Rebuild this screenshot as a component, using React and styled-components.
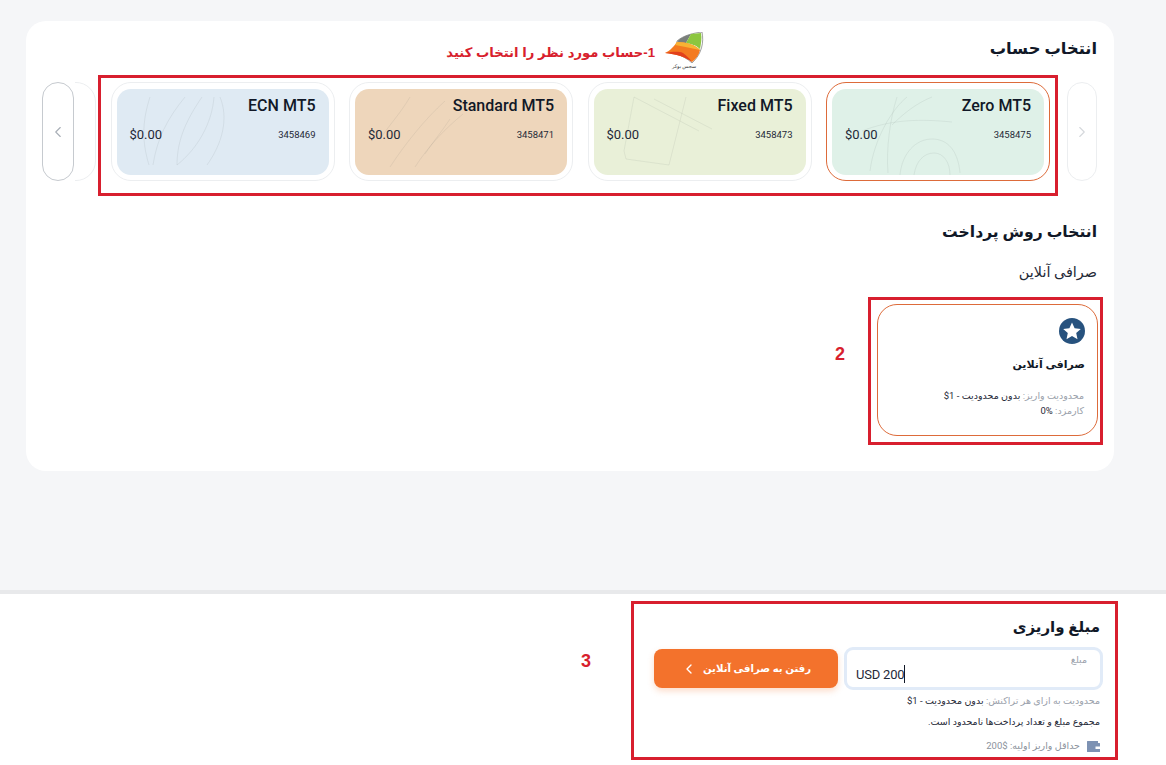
import React from 'react';
import styled, { createGlobalStyle } from 'styled-components';
import { ChevronLeft, ChevronRight } from 'lucide-react';

const GlobalStyle = createGlobalStyle`
  html, body {
    margin: 0;
    padding: 0;
    background: #f5f6f8;
  }
  body {
    font-family: Roboto, "DejaVu Sans", sans-serif;
    color: #111827;
    overflow: hidden;
  }
`;

const Page = styled.div`
  position: relative;
  direction: rtl;
  height: 765px;
  display: flex;
  flex-direction: column;
  justify-content: space-between;
`;

const Panel = styled.section`
  position: relative;
  margin: 21px 52px 0 26px;
  height: 450px;
  box-sizing: border-box;
  padding: 17px 17px 0 16px;
  background: #fff;
  border-radius: 20px;
`;

const Heading = styled.h2`
  margin: 0;
  font-size: 16.3px;
  line-height: 22px;
  font-weight: 700;
  color: #111827;
`;

const Carousel = styled.div`
  position: relative;
  display: flex;
  align-items: stretch;
  height: 99px;
  margin-top: 22px;
`;

const Arrow = styled.button`
  flex: 0 0 auto;
  width: ${(p) => (p.$muted ? 30 : 32)}px;
  height: 99px;
  padding: 0;
  display: flex;
  align-items: center;
  justify-content: center;
  background: #fff;
  border-radius: 16px;
  border: 1px solid ${(p) => (p.$muted ? '#eceef0' : '#c6cacf')};
  color: ${(p) => (p.$muted ? '#d5d8dc' : '#a8aeb6')};
`;

const Track = styled.div`
  flex: 1 1 auto;
  display: flex;
  gap: 14.5px;
  overflow: hidden;
  margin: 0 17px 0 1px;
`;

const AccountCard = styled.article`
  flex: 0 0 auto;
  width: 224px;
  height: 99px;
  box-sizing: border-box;
  padding: 6px 5px;
  border-radius: 20px;
  background: #fff;
  border: 1px solid ${(p) => (p.$active ? '#dd6b3a' : '#eceef0')};
`;

const CardFace = styled.div`
  position: relative;
  height: 86px;
  box-sizing: border-box;
  padding: 7px 13px 0 13px;
  border-radius: 14px;
  background: ${(p) => p.$bg};
  overflow: hidden;
`;

const Doodle = styled.svg`
  position: absolute;
  inset: 0;
  width: 100%;
  height: 100%;
  fill: none;
  stroke: rgba(90, 100, 100, 0.13);
  stroke-width: 0.7;
`;

const CardTitle = styled.div`
  position: relative;
  font-size: 16px;
  line-height: 20px;
  font-weight: 500;
  color: #111827;
`;

const CardRow = styled.div`
  position: relative;
  display: flex;
  justify-content: space-between;
  align-items: center;
  margin-top: 9px;
  height: 18px;
`;

const Number = styled.span`
  font-size: 9.5px;
  color: #1f2937;
`;

const Balance = styled.span`
  font-size: 13px;
  color: #1f2937;
`;

const PaymentHeading = styled(Heading)`
  margin-top: 40px;
  font-size: 15.6px;
`;

const GroupLabel = styled.div`
  margin-top: 19px;
  font-size: 14.4px;
  line-height: 22px;
  color: #1f2937;
`;

const MethodCard = styled.article`
  position: relative;
  margin: 20px -1px 0 0;
  width: 221px;
  height: 132px;
  box-sizing: border-box;
  padding: 13px 12px 0;
  border: 1px solid #dd6b3a;
  border-radius: 20px;
`;

const MethodIcon = styled.svg`
  display: block;
  width: 26px;
  height: 26px;
`;

const MethodTitle = styled.div`
  margin-top: 12px;
  font-size: 11px;
  line-height: 18px;
  font-weight: 700;
  color: #111827;
`;

const MetaRow = styled.div`
  font-size: 9.5px;
  line-height: 15px;
  color: #1f2937;
`;

const MetaList = styled.div`
  margin: 14px 1px 0 0;
`;

const Muted = styled.span`
  color: #9aa1ab;
`;

const Ltr = styled.bdi`
  direction: ltr;
`;

const BottomBar = styled.section`
  position: relative;
  height: 175px;
  box-sizing: border-box;
  padding: 22px 66px 0 0;
  background: #fff;
  border-top: 4px solid #e8e9eb;
`;

const DepositHeading = styled(Heading)`
  font-size: 15px;
`;

const FormRow = styled.div`
  display: flex;
  align-items: center;
  gap: 6px;
  margin: 9px -3px 0 0;
`;

const AmountField = styled.div`
  width: 259px;
  height: 43px;
  box-sizing: border-box;
  padding: 4px 13px 0 9px;
  border: 3px solid #e1ebf8;
  border-radius: 9px;
  background: #fff;
`;

const FieldLabel = styled.div`
  font-size: 9.5px;
  line-height: 11px;
  color: #9aa1ab;
`;

const FieldValue = styled.div`
  direction: ltr;
  display: flex;
  align-items: center;
  height: 18px;
  font-size: 13px;
  letter-spacing: -0.2px;
  color: #1f2937;
`;

const Caret = styled.span`
  width: 1px;
  height: 18px;
  background: #111827;
`;

const SubmitButton = styled.button`
  width: 184px;
  height: 39px;
  display: flex;
  align-items: center;
  justify-content: center;
  gap: 6px;
  padding: 0;
  border: 0;
  border-radius: 8px;
  background: #f3722c;
  color: #fff;
  font-family: inherit;
  font-size: 10.2px;
  font-weight: 700;
  box-shadow: 0 3px 6px rgba(243, 114, 44, 0.25);
`;

const Hint = styled.div`
  margin-top: ${(p) => p.$gap}px;
  font-size: 9.5px;
  line-height: 14px;
  color: #1f2937;
`;

const MinRow = styled.div`
  display: flex;
  align-items: center;
  gap: 6px;
  margin-top: 10px;
  font-size: 9.5px;
  line-height: 14px;
  color: #8b929c;
`;

const Frame = styled.div`
  position: absolute;
  top: ${(p) => p.$top}px;
  left: ${(p) => p.$left}px;
  width: ${(p) => p.$w}px;
  height: ${(p) => p.$h}px;
  box-sizing: border-box;
  border: 3px solid #d81f2e;
  pointer-events: none;
`;

const StepNumber = styled.div`
  position: absolute;
  top: ${(p) => p.$top}px;
  left: ${(p) => p.$left}px;
  font-family: "Liberation Sans", sans-serif;
  font-size: 18px;
  line-height: 20px;
  font-weight: 700;
  color: #d81f2e;
`;

const Note = styled.div`
  position: absolute;
  top: 11px;
  left: 420px;
  width: 258px;
  display: flex;
  align-items: flex-start;
  gap: 9px;
`;

const NoteText = styled.div`
  margin-top: 11px;
  font-family: "Liberation Sans", "DejaVu Sans", sans-serif;
  font-size: 13.2px;
  font-weight: 700;
  line-height: 20px;
  color: #d81f2e;
  white-space: nowrap;
`;

const Logo = styled.div`
  flex: 0 0 auto;
  width: 40px;
  text-align: center;
  font-size: 5px;
  line-height: 6px;
  color: #333;
`;

const LogoMark = styled.svg`
  display: block;
  width: 40px;
  height: 31px;
`;

const ACCOUNTS = [
  { name: 'Zero MT5', number: '3458475', bg: '#dff1e8', active: true, doodle: 'zero' },
  { name: 'Fixed MT5', number: '3458473', bg: '#e9f0d8', doodle: 'fixed' },
  { name: 'Standard MT5', number: '3458471', bg: '#eed6bb', doodle: 'standard' },
  { name: 'ECN MT5', number: '3458469', bg: '#dfeaf3', doodle: 'ecn' },
];

const DOODLES = {
  zero: [
    'M38 82 C42 50 60 20 75 8',
    'M56 84 C54 60 58 30 65 8',
    'M30 42 C60 30 90 30 120 33',
    'M60 36 C72 24 85 14 100 8',
    'M68 86 C70 64 84 50 100 50 C116 50 126 62 128 84',
    'M82 86 C84 72 92 64 102 64 C112 64 118 74 118 86',
  ],
  fixed: [
    'M30 62 L40 8 L105 42',
    'M75 76 L92 8',
    'M60 10 L118 40',
    'M30 62 L32 70 L75 76',
  ],
  standard: [
    'M35 78 C50 55 70 30 90 12',
    'M25 50 C35 35 45 25 55 8',
    'M60 78 C75 55 90 40 108 25',
    'M95 30 C85 45 80 50 70 65',
  ],
  ecn: [
    'M32 76 C24 50 26 30 33 8',
    'M36 76 C40 50 50 30 68 8',
    'M60 76 C60 50 70 30 85 8',
    'M60 76 C80 60 95 35 97 8',
    'M90 76 C105 55 112 30 103 8',
  ],
};

function AccountTile({ account }) {
  const { name, number, bg, active, doodle } = account;
  return (
    <AccountCard $active={active}>
      <CardFace $bg={bg}>
        <Doodle viewBox="0 0 212 86" preserveAspectRatio="none">
          {DOODLES[doodle].map((d) => (
            <path key={d} d={d} />
          ))}
        </Doodle>
        <CardTitle>{name}</CardTitle>
        <CardRow>
          <Number>{number}</Number>
          <Balance>$0.00</Balance>
        </CardRow>
      </CardFace>
    </AccountCard>
  );
}

export default function App() {
  return (
    <>
      <GlobalStyle />
      <Page>
        <Panel>
          <Heading>انتخاب حساب</Heading>
          <Note>
            <Logo>
              <LogoMark viewBox="0 0 40 31">
                <path d="M13 9 C20 3 30 1 38 0 C40 10 38 22 28 31 C24 27 18 24 13 22Z" fill="#fff" stroke="#777" strokeWidth="0.7" />
                <path d="M13 9.5 C18 4.5 24 3 27 2 L22 11 C18 10.5 15 10.5 13 9.5Z" fill="#7a7f7c" />
                <path d="M22 11 L27 2 C30 1.5 34 1.2 37 1 C38 6 37 12 36 17 C32 13 27 12 22 11Z" fill="#8cc63f" />
                <path d="M1 21 C6 19 10 14 13 10 C22 10 32 13 36 18 C35 23 32 27 28 30 C22 25 12 22 1 21Z" fill="#f47a20" />
                <path d="M13 10 C22 10 32 13 36 18 C28 16 20 15 11 13Z" fill="#f9b233" />
                <path d="M1 21 C8 20 14 19 19 21 C23 24 26 27 28 30 C22 25 12 22 1 21Z" fill="#e2401c" />
              </LogoMark>
              سجس بوکر
            </Logo>
            <NoteText>1-حساب مورد نظر را انتخاب کنید</NoteText>
          </Note>
          <Carousel>
            <Arrow $muted>
              <ChevronRight size={18} strokeWidth={1.5} />
            </Arrow>
            <Track>
              {ACCOUNTS.map((a) => (
                <AccountTile key={a.number} account={a} />
              ))}
              {/* next card, only its edge shows */}
              <AccountCard />
            </Track>
            <Arrow>
              <ChevronLeft size={18} strokeWidth={1.5} />
            </Arrow>
            <Frame $top={-7} $left={56} $w={960} $h={121} />
          </Carousel>
          <PaymentHeading>انتخاب روش پرداخت</PaymentHeading>
          <GroupLabel>صرافی آنلاین</GroupLabel>
          <MethodCard>
            <MethodIcon viewBox="0 0 26 26">
              <circle cx="13" cy="13" r="13" fill="#27527e" />
              <path d="M13 4.5 L15.6 10.2 L21.8 10.9 L17.2 15 L18.5 21.2 L13 18 L7.5 21.2 L8.8 15 L4.2 10.9 L10.4 10.2Z" fill="#fff" />
            </MethodIcon>
            <MethodTitle>صرافی آنلاین</MethodTitle>
            <MetaList>
              <MetaRow><Muted>محدودیت واریز: </Muted>بدون محدودیت - <Ltr>$1</Ltr></MetaRow>
              <MetaRow><Muted>کارمزد: </Muted><Ltr>0%</Ltr></MetaRow>
            </MetaList>
            <Frame $top={-8} $left={-10} $w={235} $h={148} />
          </MethodCard>
          <StepNumber $top={323} $left={809}>2</StepNumber>
        </Panel>
        <BottomBar>
          <DepositHeading>مبلغ واریزی</DepositHeading>
          <FormRow>
            <AmountField>
              <FieldLabel>مبلغ</FieldLabel>
              <FieldValue>USD 200<Caret /></FieldValue>
            </AmountField>
            <SubmitButton>
              رفتن به صرافی آنلاین
              <ChevronLeft size={16} strokeWidth={2} />
            </SubmitButton>
          </FormRow>
          <Hint $gap={4}><Muted>محدودیت به ازای هر تراکنش: </Muted>بدون محدودیت - <Ltr>$1</Ltr></Hint>
          <Hint $gap={7}>مجموع مبلغ و تعداد پرداخت‌ها نامحدود است.</Hint>
          <MinRow>
            <svg width="14" height="13" viewBox="0 0 14 13">
              <path d="M1 1.5 Q1 1 1.5 1 H12 V3 H13.5 Q14 3 14 3.5 V12 H1.5 Q1 12 1 11.5 Z" fill="#7d92b3" />
              <rect x="9.5" y="6.5" width="4.5" height="2.5" fill="#fff" />
            </svg>
            <span>حداقل واریز اولیه: <Ltr>200$</Ltr></span>
          </MinRow>
          <Frame $top={7} $left={631} $w={487} $h={159} />
          <StepNumber $top={57} $left={581}>3</StepNumber>
        </BottomBar>
      </Page>
    </>
  );
}
